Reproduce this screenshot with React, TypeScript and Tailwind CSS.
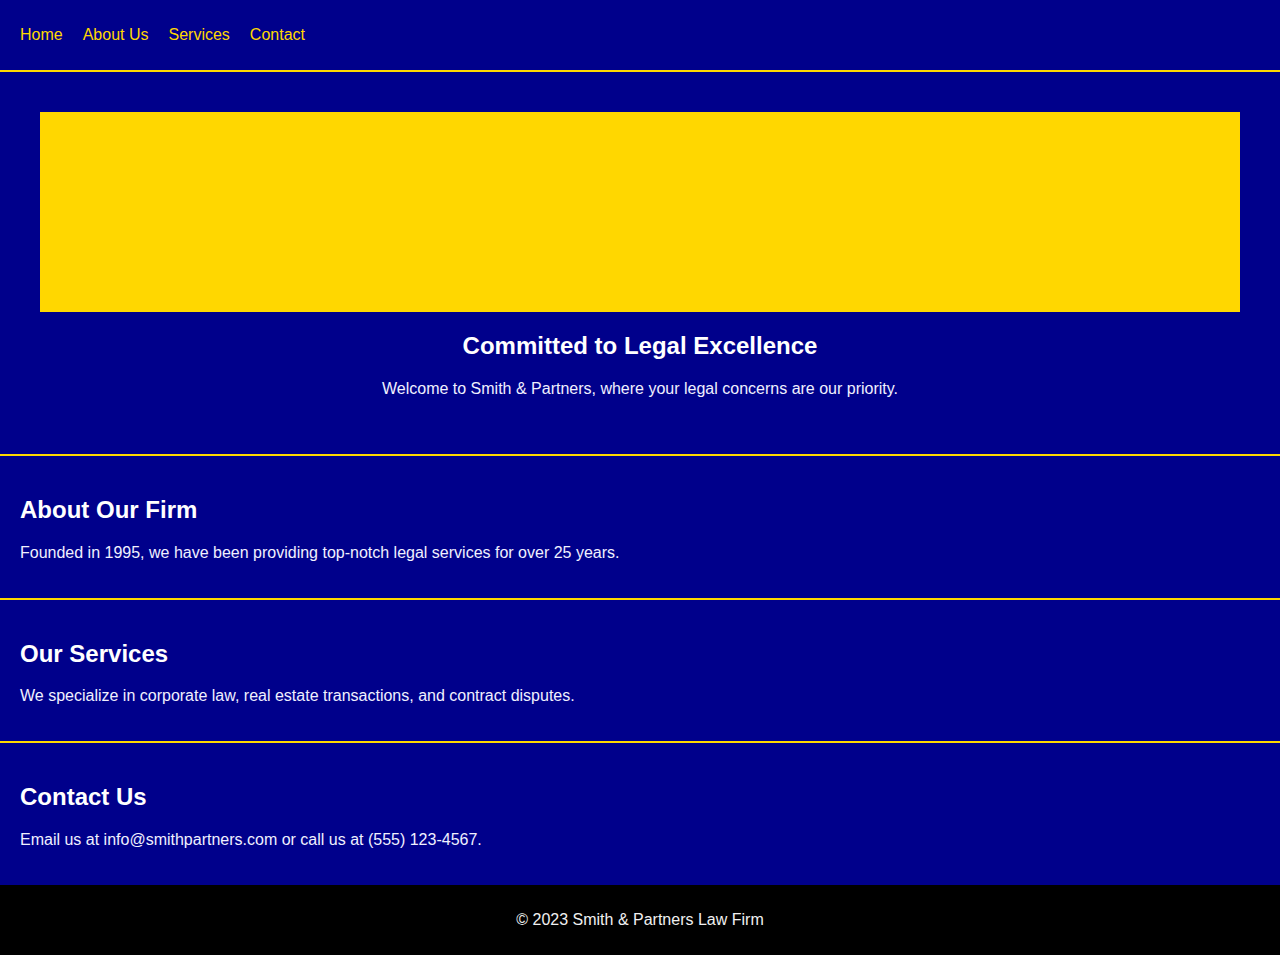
import React from 'react';

const sections = [
  {
    title: 'About Our Firm',
    body: 'Founded in 1995, we have been providing top-notch legal services for over 25 years.',
  },
  {
    title: 'Our Services',
    body: 'We specialize in corporate law, real estate transactions, and contract disputes.',
  },
  {
    title: 'Contact Us',
    body: 'Email us at info@smithpartners.com or call us at (555) 123-4567.',
  },
];

const App: React.FC = () => {
  return (
    <div className="min-h-[955px] bg-[#00008b] text-white font-['Liberation_Sans',Arial,sans-serif] leading-[normal] flex flex-col">
      <nav className="h-[72px] px-5 flex items-center gap-5 border-b-2 border-[#ffd700] text-base text-[#ffd700]">
        <a href="#home">Home</a>
        <a href="#about">About Us</a>
        <a href="#services">Services</a>
        <a href="#contact">Contact</a>
      </nav>

      <section className="p-10 text-center">
        <div className="h-[200px] bg-[#ffd700]" />
        <h2 className="my-[19.92px] text-2xl leading-[normal] font-bold">Committed to Legal Excellence</h2>
        <p className="my-4 text-base leading-[normal] text-[#f0f0ff]">
          Welcome to Smith &amp; Partners, where your legal concerns are our priority.
        </p>
      </section>

      {sections.map((s) => (
        <section key={s.title} className="border-t-2 border-[#ffd700] p-5">
          <h2 className="my-[19.92px] text-2xl leading-[normal] font-bold">{s.title}</h2>
          <p className="my-4 text-base leading-[normal] text-[#f0f0ff]">{s.body}</p>
        </section>
      ))}

      <footer className="flex-1 bg-black flex items-center justify-center text-base text-[#f0f0f0]">
        © 2023 Smith &amp; Partners Law Firm
      </footer>
    </div>
  );
};

export default App;
